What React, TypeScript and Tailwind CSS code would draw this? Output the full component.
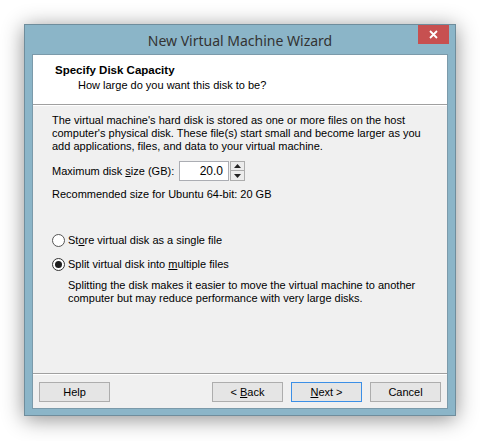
export default function App() {
  const body = { fontFamily: '"Liberation Sans", Arial, sans-serif' };

  return (
    <div className="w-[480px] h-[441px] bg-white pt-[24px] pl-[24px]" style={body}>
      <div className="w-[432px] h-[392px] bg-[#8bb5c8] border border-[#6f8d9c] shadow-[0_3px_20px_rgba(0,0,0,0.45)] flex flex-col">
        {/* title bar */}
        <div className="relative h-[29px] flex items-center justify-center">
          <span
            className="text-[14px] text-[#333] pt-[1px]"
            style={{ fontFamily: '"Noto Sans", "Open Sans", sans-serif' }}
          >
            New Virtual Machine Wizard
          </span>
          <button className="absolute top-0 right-[6px] w-[31px] h-[19px] bg-[#c75050] flex items-center justify-center">
            <svg width="9" height="9" viewBox="0 0 9 9">
              <path d="M1 1L8 8M8 1L1 8" stroke="#fff" strokeWidth="1.8" />
            </svg>
          </button>
        </div>

        {/* client area */}
        <div className="mx-[7px] h-[355px] bg-[#f0f0f0] border border-[#7b9aaa] flex flex-col text-[11px] text-black">
          <div className="h-[50px] bg-white border-b border-[#a0a0a0] pl-[22px] pt-[8px]">
            <div className="font-bold text-[11.5px] leading-[14px]">Specify Disk Capacity</div>
            <div className="pl-[23px] mt-[1px] leading-[14px]">How large do you want this disk to be?</div>
          </div>

          <div className="flex-1 border-t border-white flex flex-col pl-[19px] pr-[14px] pt-[8px]">
            <p className="leading-[13px]">
              The virtual machine's hard disk is stored as one or more files on the host
              <br />
              computer's physical disk. These file(s) start small and become larger as you
              <br />
              add applications, files, and data to your virtual machine.
            </p>

            <div className="flex items-center mt-[8px] h-[20px]">
              <span className="w-[127px]">
                Maximum disk <span className="underline">s</span>ize (GB):
              </span>
              <div className="flex h-[20px]">
                <div className="w-[50px] h-[20px] bg-white border border-[#abadb3] flex items-center justify-end pr-[5px] text-[12px]">
                  20.0
                </div>
                <div className="flex flex-col w-[15px] h-[20px] ml-[1px]">
                  <div className="h-[10px] bg-[#ececec] border border-[#acacac] flex items-center justify-center">
                    <svg width="7" height="4" viewBox="0 0 7 4">
                      <path d="M0 4L3.5 0L7 4Z" fill="#222" />
                    </svg>
                  </div>
                  <div className="h-[10px] bg-[#ececec] border border-t-0 border-[#acacac] flex items-center justify-center">
                    <svg width="7" height="4" viewBox="0 0 7 4">
                      <path d="M0 0L3.5 4L7 0Z" fill="#222" />
                    </svg>
                  </div>
                </div>
              </div>
            </div>

            <div className="mt-[7px] leading-[13px]">Recommended size for Ubuntu 64-bit: 20 GB</div>

            <label className="flex items-center mt-[32px] h-[14px]">
              <span className="w-[13px] h-[13px] rounded-full border border-[#555] bg-white mr-[3px]" />
              <span>
                St<span className="underline">o</span>re virtual disk as a single file
              </span>
            </label>

            <label className="flex items-center mt-[10px] h-[14px]">
              <span className="w-[13px] h-[13px] rounded-full border border-[#333] bg-white mr-[3px] flex items-center justify-center">
                <span className="w-[7px] h-[7px] rounded-full bg-[#1e1e1e]" />
              </span>
              <span>
                Split virtual disk into <span className="underline">m</span>ultiple files
              </span>
            </label>

            <p className="pl-[16px] mt-[8px] leading-[13px]">
              Splitting the disk makes it easier to move the virtual machine to another
              <br />
              computer but may reduce performance with very large disks.
            </p>
          </div>

          <div className="h-[35px] border-t border-[#a0a0a0] flex flex-col">
            <div className="flex-1 border-t border-white flex items-start pt-[7px] pl-[6px]">
              <button className="w-[71px] h-[20px] bg-[#e5e5e5] border border-[#adadad] text-[11px]">Help</button>
              <div className="flex-1" />
              <button className="w-[71px] h-[20px] bg-[#e5e5e5] border border-[#adadad] text-[11px]">
                &lt; <span className="underline">B</span>ack
              </button>
              <button className="w-[71px] h-[20px] ml-[8px] bg-[#e5e5e5] border border-[#3c8fe6] text-[11px]">
                <span className="underline">N</span>ext &gt;
              </button>
              <button className="w-[71px] h-[20px] ml-[8px] mr-[6px] bg-[#e5e5e5] border border-[#adadad] text-[11px]">
                Cancel
              </button>
            </div>
          </div>
        </div>
      </div>
    </div>
  );
}
